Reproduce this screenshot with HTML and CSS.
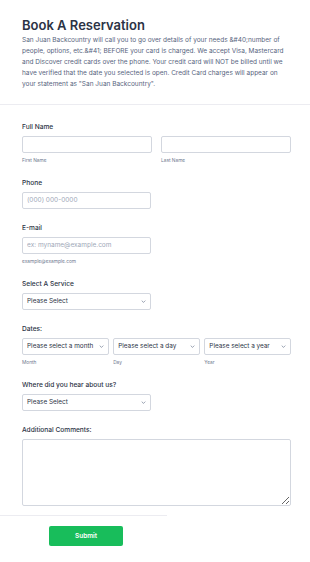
FILE: index.html
```html
<!DOCTYPE html>
<html lang="en">
<head>
  <meta charset="UTF-8">
  <meta name="viewport" content="width=device-width, initial-scale=1.0">
  <title>Book A Reservation</title>
  <link rel="stylesheet" href="styles.css">
</head>
<body>
<form class="form">
  <div class="form-header">
    <h1>Book A Reservation</h1>
    <p class="description">San Juan Backcountry will call you to go over details of your needs &amp;#40;number of people, options, etc.&amp;#41; BEFORE your card is charged. We accept Visa, Mastercard and Discover credit cards over the phone. Your credit card will NOT be billed until we have verified that the date you selected is open. Credit Card charges will appear on your statement as "San Juan Backcountry".</p>
  </div>

  <div class="form-body">
    <div class="field">
      <label class="label">Full Name</label>
      <div class="row two">
        <div>
          <input class="input" type="text">
          <div class="sublabel">First Name</div>
        </div>
        <div>
          <input class="input" type="text">
          <div class="sublabel">Last Name</div>
        </div>
      </div>
    </div>

    <div class="field">
      <label class="label">Phone</label>
      <input class="input half" type="text" placeholder="(000) 000-0000">
    </div>

    <div class="field">
      <label class="label">E-mail</label>
      <input class="input half" type="text" placeholder="ex: myname@example.com">
      <div class="sublabel">example@example.com</div>
    </div>

    <div class="field">
      <label class="label">Select A Service</label>
      <div class="select-wrap half">
        <select class="select"><option>Please Select</option></select>
        <svg class="chevron" viewBox="0 0 8 5"><path d="M1 1l3 3 3-3" fill="none" stroke="#57647e" stroke-width="1"/></svg>
      </div>
    </div>

    <div class="field">
      <label class="label">Dates:</label>
      <div class="row three">
        <div>
          <div class="select-wrap">
            <select class="select"><option>Please select a month</option></select>
            <svg class="chevron" viewBox="0 0 8 5"><path d="M1 1l3 3 3-3" fill="none" stroke="#57647e" stroke-width="1"/></svg>
          </div>
          <div class="sublabel">Month</div>
        </div>
        <div>
          <div class="select-wrap">
            <select class="select"><option>Please select a day</option></select>
            <svg class="chevron" viewBox="0 0 8 5"><path d="M1 1l3 3 3-3" fill="none" stroke="#57647e" stroke-width="1"/></svg>
          </div>
          <div class="sublabel">Day</div>
        </div>
        <div>
          <div class="select-wrap">
            <select class="select"><option>Please select a year</option></select>
            <svg class="chevron" viewBox="0 0 8 5"><path d="M1 1l3 3 3-3" fill="none" stroke="#57647e" stroke-width="1"/></svg>
          </div>
          <div class="sublabel">Year</div>
        </div>
      </div>
    </div>

    <div class="field">
      <label class="label">Where did you hear about us?</label>
      <div class="select-wrap half">
        <select class="select"><option>Please Select</option></select>
        <svg class="chevron" viewBox="0 0 8 5"><path d="M1 1l3 3 3-3" fill="none" stroke="#57647e" stroke-width="1"/></svg>
      </div>
    </div>

    <div class="field last">
      <label class="label">Additional Comments:</label>
      <textarea class="textarea"></textarea>
    </div>
  </div>

  <div class="form-footer">
    <button class="submit" type="button">Submit</button>
  </div>
</form>
</body>
</html>
```

FILE: styles.css
```css
body {
  margin: 0;
  padding: 0;
  background-color: #fff;
  font-family: Inter, "Noto Sans", sans-serif;
  color: #2c3345;
}

.form-header {
  padding: 16px 19px 14px 22px;
  border-bottom: 1px solid #ececf1;
}

h1 {
  margin: 0;
  font-size: 13px;
  line-height: 18px;
  font-weight: 600;
  color: #2c3345;
}

.description {
  margin: 1px 0 0;
  font-size: 6.5px;
  line-height: 10.9px;
  color: #57647e;
}

.form-body {
  padding: 17px 19px 0 22px;
}

.field {
  margin-bottom: 14px;
}

.field.last {
  margin-bottom: 9px;
}

.label {
  display: block;
  font-size: 6.6px;
  line-height: 10px;
  font-weight: 500;
  margin-bottom: 4px;
}

.row {
  display: grid;
}

.row.two {
  grid-template-columns: 1fr 1fr;
  column-gap: 9px;
}

.row.three {
  grid-template-columns: 1fr 1fr 1fr;
  column-gap: 4.5px;
}

.input,
.select,
.textarea {
  box-sizing: border-box;
  width: 100%;
  border: 1px solid #d3d7df;
  border-radius: 2px;
  background: #fff;
  font-family: Inter, "Noto Sans", sans-serif;
  color: #2c3345;
  margin: 0;
  outline: none;
}

.input {
  display: block;
  height: 17px;
  padding: 0 4px;
  font-size: 6.5px;
}

.input::placeholder {
  color: #a0a8b8;
}

.half {
  width: 129px;
}

.sublabel {
  margin-top: 3px;
  font-size: 4.8px;
  line-height: 8px;
  color: #6f7a90;
}

.select-wrap {
  position: relative;
}

.select {
  display: block;
  height: 17px;
  padding: 0 4px;
  font-size: 6.4px;
  -webkit-appearance: none;
  appearance: none;
}

.chevron {
  position: absolute;
  right: 5px;
  top: 7px;
  width: 5px;
  height: 3px;
}

.textarea {
  display: block;
  height: 67px;
  resize: vertical;
}

.form-footer::before {
  content: "";
  display: block;
  width: 167px;
  border-top: 1px solid #ececf1;
  margin-bottom: 10px;
}

.submit {
  display: block;
  margin-left: 49px;
  width: 74px;
  height: 20px;
  border: 0;
  border-radius: 2px;
  background-color: #18bd5b;
  color: #fff;
  font-family: Inter, "Noto Sans", sans-serif;
  font-size: 6.5px;
  font-weight: 600;
}
```
